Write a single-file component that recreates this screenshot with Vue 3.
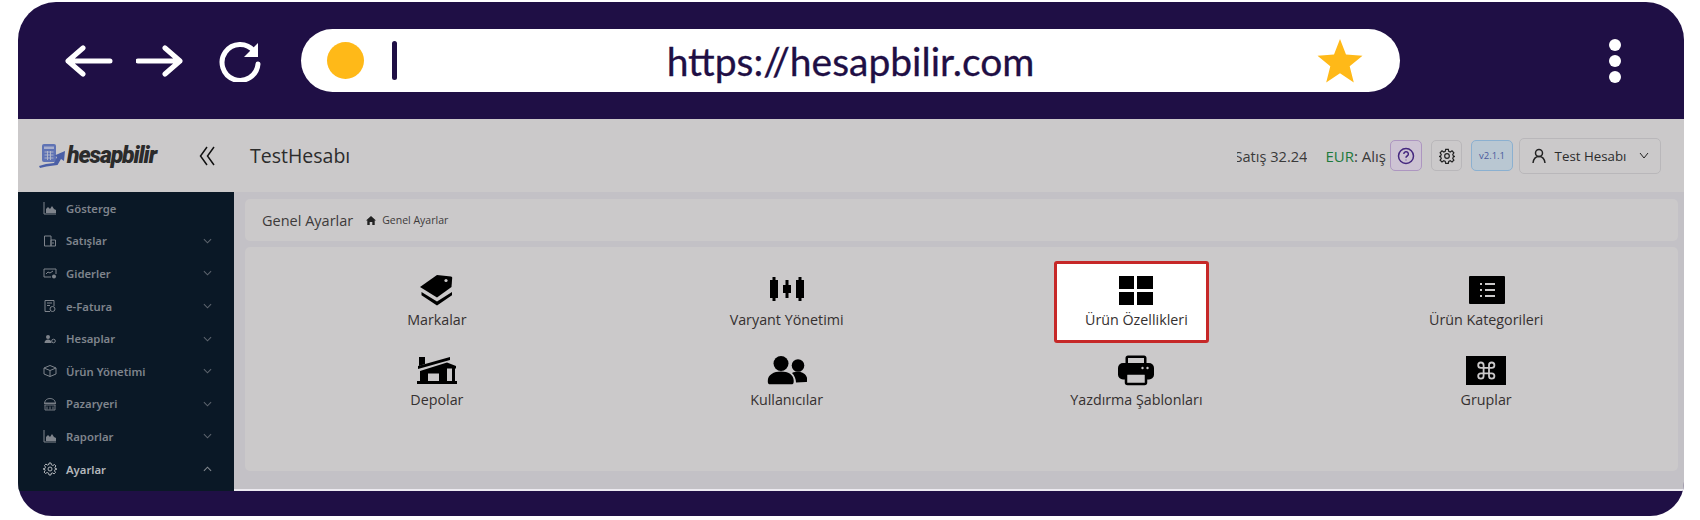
<template>
  <div class="frame">
    <div class="toolbar">
      <svg class="nav-icon" width="48" height="32" viewBox="0 0 48 32"><path d="M3 16h42M18 3 3 16l15 13" /></svg>
      <svg class="nav-icon fwd" width="47" height="32" viewBox="0 0 47 32"><path d="M2 16h42M29 3l15 13-15 13" /></svg>
      <svg class="nav-icon reload" width="43" height="42" viewBox="0 0 43 42"><path d="M35 11A18 18 0 1 0 39 24" /><path class="fill" d="M39 3v14H25z" /></svg>
      <div class="pill">
        <div class="pill-left"><span class="dot"></span><span class="caret"></span></div>
        <span class="url">https://hesapbilir.com</span>
        <div class="pill-right">
          <svg width="46" height="44" viewBox="0 0 46 44"><path fill="#ffb918" d="M23 0l6 15.600 16.500 1.100-12.800 10.500 4.100 16.200L23 34.300 9.200 43.400l4.100-16.200L.5 16.700 17 15.600z" /></svg>
        </div>
      </div>
      <div class="more"><i></i><i></i><i></i></div>
    </div>

    <div class="topbar">
      <div class="logo">
        <svg width="28" height="26" viewBox="0 0 28 26">
          <rect x="4" y="1" width="14" height="18" rx="2" fill="#6073b4" />
          <path d="M6 3.500h10V6H6z" fill="#a9b0cc" />
          <path d="M6.500 9h9M6.500 12h9M6.500 15h9M9.500 8v9M12.500 8v9" stroke="#b6bacb" stroke-width=".9" />
          <path d="M1 23l7-2 8-1 3-6-2.500-1.500L27 8l-1 10-3-2-3.500 6-11 1.500L2 25z" fill="#4b5fa6" />
        </svg>
        <span class="logo-text">hesapbilir</span>
      </div>
      <svg class="collapse" width="16" height="20" viewBox="0 0 16 20"><path d="M8 1 1.500 10 8 19M15 1 8.500 10 15 19" /></svg>
      <span class="tenant">TestHesabı</span>
      <div class="top-right">
        <div class="rate"><span class="rate-clip"><span>Satış 32.24</span></span><span class="eur"><b>EUR</b>: Alış</span></div>
        <button class="tbtn help">
          <svg width="18" height="18" viewBox="0 0 18 18"><circle cx="9" cy="9" r="7.500" /><path d="M6.800 7a2.300 2.300 0 1 1 3.400 2c-.8.500-1.200.9-1.200 1.800" /><path d="M9 12.700v.6" /></svg>
        </button>
        <button class="tbtn gear">
          <svg width="16" height="16" viewBox="0 0 24 24"><path d="M10 2h4l.6 3 2.300 1 2.600-1.700 2.800 2.800-1.700 2.600 1 2.300 3 .6v0l-3 .6-1 2.300 1.700 2.600-2.800 2.800-2.600-1.700-2.300 1-.6 3h-4l-.6-3-2.300-1-2.600 1.700-2.800-2.800 1.700-2.600-1-2.300-3-.6 3-.6 1-2.300L1.700 7.100l2.800-2.800 2.600 1.700 2.300-1z" /><circle cx="12" cy="12" r="3.500" /></svg>
        </button>
        <button class="tbtn version">v2.1.1</button>
        <button class="tbtn user">
          <svg width="16" height="16" viewBox="0 0 16 16"><circle cx="8" cy="5" r="3.500" /><path d="M2 15c.5-4 3-6.500 6-6.500s5.500 2.500 6 6.500" /></svg>
          <span>Test Hesabı</span>
          <svg class="caret-down" width="10" height="7" viewBox="0 0 10 7"><path d="M1 1l4 5 4-5" /></svg>
        </button>
      </div>
    </div>

    <div class="body">
      <aside class="sidebar">
        <div v-for="item in menu" :key="item.label" class="menu-item" :class="{ open: item.open }">
          <svg class="menu-icon" width="14" height="14" viewBox="0 0 14 14" v-html="item.icon"></svg>
          <span class="menu-label">{{ item.label }}</span>
          <svg v-if="item.arrow" class="menu-arrow" width="9" height="6" viewBox="0 0 10 6">
            <path :d="item.open ? 'M1 5l4-4 4 4' : 'M1 1l4 4 4-4'" />
          </svg>
        </div>
      </aside>

      <main class="content">
        <div class="card crumbs">
          <span class="crumb-title">Genel Ayarlar</span>
          <svg width="10" height="9" viewBox="0 0 10 9"><path fill="#222" d="M5 0 0 4.500h1.300V9h2.400V6h2.600v3h2.400V4.500H10z" /></svg>
          <span class="crumb-small">Genel Ayarlar</span>
        </div>
        <div class="card tiles">
          <div v-for="tile in tiles" :key="tile.label" class="tile" :class="{ active: tile.active }">
            <svg class="tile-icon" width="40" height="36" viewBox="0 0 40 36" v-html="tile.icon"></svg>
            <span class="tile-label">{{ tile.label }}</span>
          </div>
        </div>
      </main>
    </div>
    <div class="bottom"></div>
  </div>
</template>

<script setup>
const chart = '<path d="M1 1v12h12" fill="none" stroke="currentColor"/><path d="M3 12V8l2-2 2 2 2-3 2 3 2 1v3z" fill="currentColor"/>'
const menu = [
  { label: 'Gösterge', icon: chart },
  { label: 'Satışlar', arrow: true, icon: '<path d="M1.500 2h6.500v10H1.500zM8 6h4.500v6H8zM10 8v2" fill="none" stroke="currentColor"/>' },
  { label: 'Giderler', arrow: true, icon: '<path d="M8 11H1V3h12v5M3 8l2-2 2 1 3-2" fill="none" stroke="currentColor"/><circle cx="11" cy="10.500" r="2" fill="currentColor"/>' },
  { label: 'e-Fatura', arrow: true, icon: '<path d="M7 12.500H2v-11h9V7M4 4h5M4 6.500h3" fill="none" stroke="currentColor"/><circle cx="9.500" cy="10" r="2.500" fill="none" stroke="currentColor"/>' },
  { label: 'Hesaplar', arrow: true, icon: '<circle cx="5" cy="5" r="2" fill="currentColor"/><path d="M1.500 11c0-2 1.500-3.500 3.500-3.500S8.500 9 8.500 11z" fill="currentColor"/><circle cx="10.500" cy="9" r="1.800" fill="none" stroke="currentColor"/>' },
  { label: 'Ürün Yönetimi', arrow: true, icon: '<path d="M1 4l6-2.500L13 4v6l-6 2.500L1 10zM1 4l6 2.500L13 4M7 6.500v6" fill="none" stroke="currentColor"/>' },
  { label: 'Pazaryeri', arrow: true, icon: '<path d="M1.500 6C2 3 4 1.500 7 1.500S12 3 12.500 6zM1 6.500h12M1.500 8h11M2 8v5h10V8M4 9.500v3M7 9.500v3M10 9.500v3" fill="none" stroke="currentColor" stroke-width=".9"/>' },
  { label: 'Raporlar', arrow: true, icon: chart },
  { label: 'Ayarlar', arrow: true, open: true, icon: '<circle cx="7" cy="7" r="2" fill="none" stroke="currentColor"/><path d="M6 1h2l.4 1.800 1.500.7 1.600-1 1.400 1.400-1 1.600.7 1.500L14 7l-1.800.4-.7 1.500 1 1.600-1.400 1.400-1.600-1-1.500.7L8 13H6l-.4-1.800-1.500-.7-1.600 1-1.400-1.400 1-1.600-.7-1.500L0 7l1.800-.4.7-1.500-1-1.600 1.400-1.400 1.600 1 1.500-.7z" fill="none" stroke="currentColor"/>' },
]
const tiles = [
  { label: 'Markalar', icon: '<path d="M3 15 20 3l14 1.500c.8.100 1.200.5 1.200 1.300L34.500 15 20 25.500z"/><circle cx="29" cy="8.500" r="1.600" fill="#cbc9ca"/><path d="M4.500 20 20 29.500 35 20v3.200L20 33.500 4.500 23.200z"/>' },
  { label: 'Varyant Yönetimi', icon: '<path d="M5.500 5h3v3H11v18H8.500v3h-3v-3H3V8h2.500zM18.500 8h3v5H24v8h-2.500v5h-3v-5H16v-8h2.500zM31.500 5h3v3H37v18h-2.500v3h-3v-3H29V8h2.500z"/>' },
  { label: 'Ürün Özellikleri', active: true, icon: '<path d="M3 4h15v13H3zM21 4h16v13H21zM3 20h15v13H3zM21 20h16v13H21z"/>' },
  { label: 'Ürün Kategorileri', icon: '<rect x="3" y="4" width="36" height="28" rx="1"/><path d="M14 12h2M14 18h2M14 24h2M19 12h10M19 18h10M19 24h10" stroke="#cbc9ca" stroke-width="2.200"/>' },
  { label: 'Depolar', icon: '<path d="M2 5h6v7l-6 2z"/><path d="M1 14 33 5v3L1 17z"/><path fill-rule="evenodd" d="M3 19 30 10.500V29H3zM11 21.500h11V30H11z"/><path d="M30 10.500l9 3.500v2.500h-9zM35 16h3v13h-3z"/><path d="M0 29h11v3H0zM22 29h18v3H22zM11 30h11v2H11z"/>' },
  { label: 'Kullanıcılar', icon: '<circle cx="14" cy="11.500" r="7.500"/><path d="M1 31c-1.500-7.500 5-11.500 13-11.500s14 4 12.500 11.500c-.2 1-1 1.200-2 1.200H3c-1 0-1.800-.2-2-1.200z"/><circle cx="31" cy="13.500" r="6.300"/><path d="M25 21c2-1 4-1.200 6-1.200 6 0 9.500 4 9.500 9 0 .8-.5 1.200-1.500 1.200l-10 .5c0-3.500-1.500-7-4-9.500z"/>' },
  { label: 'Yazdırma Şablonları', icon: '<path fill-rule="evenodd" d="M9.500 6c0-1.500 1-2.500 2.500-2.500h16c1.500 0 2.500 1 2.500 2.500v7h-21zM12 6v6h16V6z"/><rect x="2" y="11" width="36" height="16.500" rx="5"/><rect x="10" y="21.500" width="20" height="10.500" rx="1.500" fill="#cbc9ca" stroke="#000" stroke-width="2.500"/><circle cx="26.500" cy="16" r="1.200" fill="#cbc9ca"/><circle cx="31.500" cy="16" r="1.200" fill="#cbc9ca"/>' },
  { label: 'Gruplar', icon: '<rect x="0" y="4" width="41" height="29"/><path transform="translate(9.500 7.800) scale(.9)" d="M18 3a3 3 0 0 0-3 3v12a3 3 0 0 0 3 3 3 3 0 0 0 3-3 3 3 0 0 0-3-3H6a3 3 0 0 0-3 3 3 3 0 0 0 3 3 3 3 0 0 0 3-3V6a3 3 0 0 0-3-3 3 3 0 0 0-3 3 3 3 0 0 0 3 3h12a3 3 0 0 0 3-3 3 3 0 0 0-3-3z" fill="none" stroke="#cbc9ca" stroke-width="2"/>' },
]
</script>

<style>
html,
body {
  background: #fff;
}
</style>

<style scoped>
.frame {
  width: 1666px;
  height: 514px;
  margin: 2px 0 0 18px;
  border-radius: 38px 38px 34px 34px;
  overflow: hidden;
  display: flex;
  flex-direction: column;
  background: #1f0f45;
  font-family: "Open Sans", "Noto Sans", sans-serif;
}

.toolbar {
  height: 117px;
  flex: none;
  display: flex;
  align-items: center;
  padding-left: 47px;
  box-sizing: border-box;
}

.nav-icon {
  fill: none;
  stroke: #fff;
  stroke-width: 5;
  stroke-linecap: round;
  stroke-linejoin: round;
}

.nav-icon .fill {
  fill: #fff;
  stroke: none;
}

.fwd {
  margin-left: 23px;
}

.reload {
  margin-left: 36px;
}

.pill {
  margin-left: 39px;
  width: 1099px;
  height: 63px;
  border-radius: 32px;
  background: #fff;
  display: grid;
  grid-template-columns: 1fr auto 1fr;
  align-items: center;
}

.pill-left {
  display: flex;
  align-items: center;
  padding-left: 26px;
}

.dot {
  width: 37px;
  height: 37px;
  border-radius: 50%;
  background: #ffb918;
}

.caret {
  width: 5px;
  height: 39px;
  margin-left: 28px;
  border-radius: 3px;
  background: #1f0f45;
}

.url {
  font-family: "Lato", sans-serif;
  font-size: 39px;
  color: #1f0f45;
  -webkit-text-stroke: 0.3px #1f0f45;
}

.pill-right {
  display: flex;
  justify-content: flex-end;
  padding-right: 37px;
}

.more {
  margin-left: 209px;
  display: flex;
  flex-direction: column;
  gap: 4px;
}

.more i {
  display: block;
  width: 12px;
  height: 12px;
  border-radius: 50%;
  background: #fff;
}

.topbar {
  height: 73px;
  flex: none;
  display: flex;
  align-items: center;
  background: #cbc9ca;
  padding-right: 23px;
}

.logo {
  display: flex;
  align-items: center;
  gap: 1px;
  margin-left: 20px;
  width: 161px;
  flex: none;
}

.logo-text {
  font-family: "Roboto", sans-serif;
  font-weight: 900;
  font-style: italic;
  font-size: 23px;
  letter-spacing: -1.1px;
  color: #2b2b2b;
}

.collapse {
  fill: none;
  stroke: #111;
  stroke-width: 1.500;
  flex: none;
}

.tenant {
  margin-left: 35px;
  font-size: 19.500px;
  color: #2c2c2c;
}

.top-right {
  margin-left: auto;
  display: flex;
  align-items: center;
  gap: 9px;
}

.rate {
  display: flex;
  align-items: center;
  font-size: 14.600px;
  color: #3a3a3a;
  margin-right: -5px;
}

.rate-clip {
  width: 70px;
  overflow: hidden;
  display: flex;
  justify-content: flex-end;
  white-space: nowrap;
  margin-right: 18px;
}

.eur {
  font-size: 15px;
}

.eur b {
  font-weight: 400;
  color: #1e7a3c;
}

.tbtn {
  box-sizing: border-box;
  height: 31px;
  border: 1px solid #b9b7ba;
  border-radius: 5px;
  background: #cbc9ca;
  display: flex;
  align-items: center;
  justify-content: center;
  padding: 0;
  font-family: inherit;
}

.tbtn svg {
  fill: none;
  stroke: #222;
  stroke-width: 1.500;
}

.help {
  width: 32px;
  background: #cdc3d3;
  border-color: #ad96c0;
}

.help svg {
  stroke: #45287f;
}

.gear {
  width: 31px;
}

.gear svg {
  stroke-width: 1.800;
}

.version {
  width: 42px;
  background: #b9c7d2;
  border-color: #8bb0d0;
  color: #4a5a9c;
  font-size: 9.500px;
}

.user {
  width: 142px;
  height: 36px;
  gap: 8px;
  font-size: 13.300px;
  color: #2c2c2c;
  margin-left: -3px;
}

.user svg.caret-down {
  stroke-width: 1;
  margin-left: 5px;
}

.body {
  height: 297px;
  flex: none;
  display: flex;
  border-bottom: 2px solid #eceaf0;
  box-sizing: content-box;
}

.sidebar {
  width: 216px;
  flex: none;
  background: #0a1826;
  display: flex;
  flex-direction: column;
  margin-bottom: -2px;
  overflow: hidden;
}

.menu-item {
  height: 32.600px;
  flex: none;
  display: flex;
  align-items: center;
  padding: 0 22px 0 25px;
  color: #7f848c;
  font-size: 11.300px;
  font-weight: 600;
  font-family: "Noto Sans", sans-serif;
}

.menu-item.open {
  color: #b4b7bb;
}

.menu-icon {
  flex: none;
  margin-right: 9px;
}

.menu-label {
  flex: 1;
}

.menu-arrow {
  fill: none;
  stroke: currentColor;
  stroke-width: 1.200;
  opacity: 0.7;
}

.content {
  flex: 1;
  background: #c3c1c6;
  padding: 7px 6px 0 11px;
  box-sizing: border-box;
  display: flex;
  flex-direction: column;
  gap: 6px;
}

.card {
  background: #cbc9ca;
  border-radius: 5px;
}

.crumbs {
  height: 42px;
  flex: none;
  display: flex;
  align-items: center;
  padding-left: 17px;
  color: #3d3a3a;
}

.crumb-title {
  font-size: 14.500px;
  margin-right: 13px;
}

.crumb-small {
  font-size: 10.500px;
  margin-left: 6px;
}

.tiles {
  height: 224px;
  flex: none;
  box-sizing: border-box;
  padding: 14px 17px 0;
  display: grid;
  grid-template-columns: repeat(4, 1fr);
  grid-auto-rows: 80px;
  justify-items: center;
}

.tile {
  box-sizing: border-box;
  width: 155px;
  height: 82px;
  padding-top: 8px;
  border: 3px solid transparent;
  border-radius: 3px;
  display: flex;
  flex-direction: column;
  align-items: center;
  white-space: nowrap;
}

.tile.active {
  background: #fff;
  border-color: #c62828;
  padding-left: 10px;
  margin-right: 10px;
}

.tile-icon {
  flex: none;
  fill: #000;
}

.tile-label {
  margin-top: 2px;
  font-size: 14.300px;
  line-height: 20px;
  color: #353030;
}

.bottom {
  flex: 1;
}
</style>
